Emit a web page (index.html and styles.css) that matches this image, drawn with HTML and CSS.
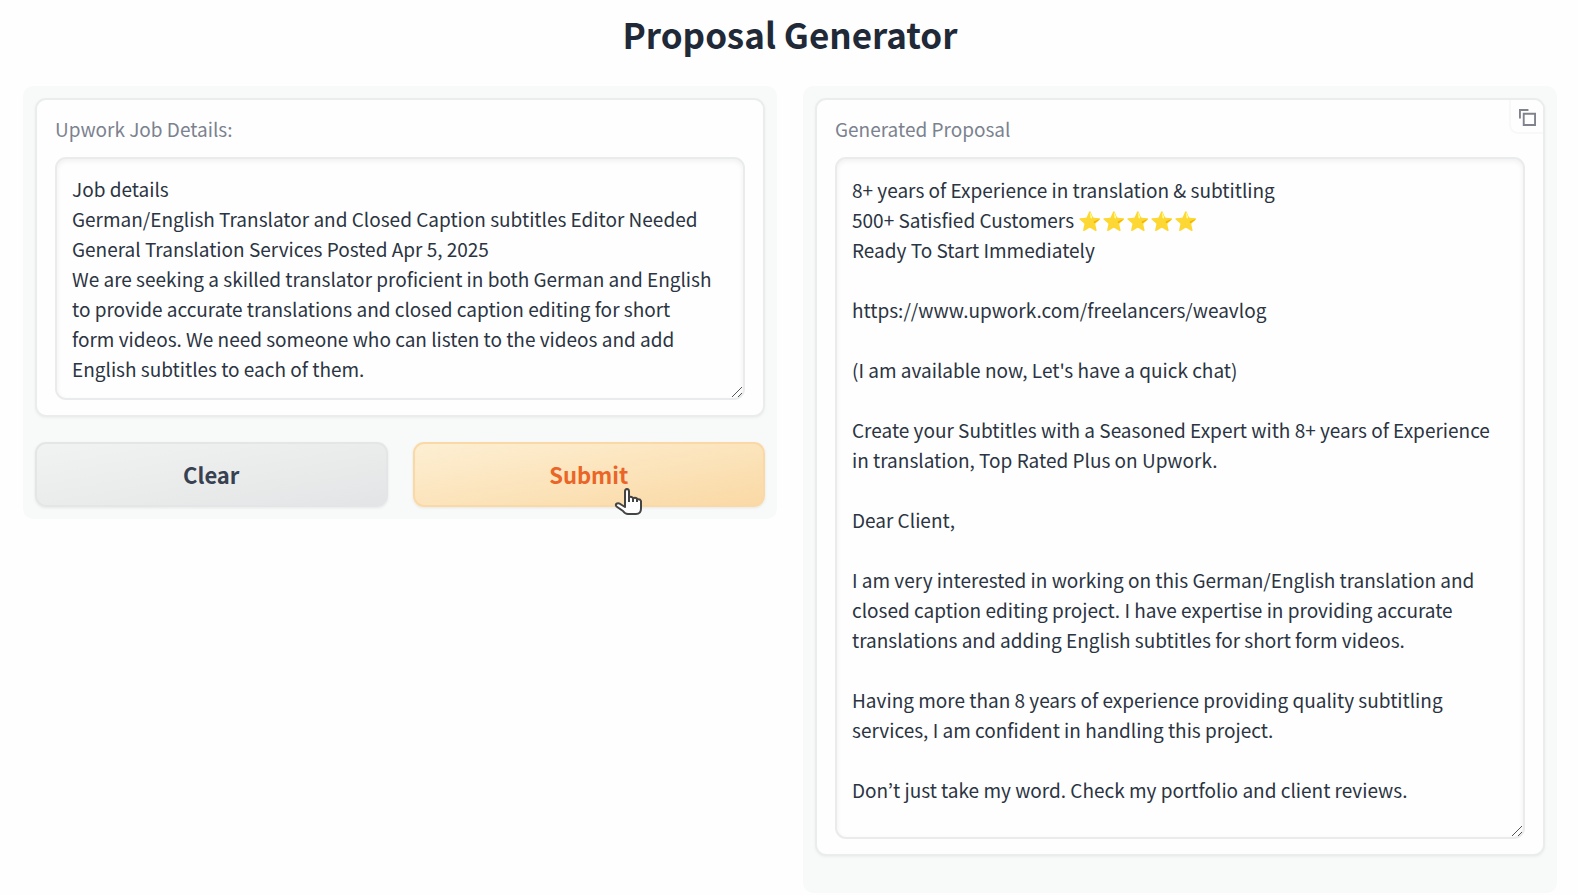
FILE: index.html
```html
<!DOCTYPE html>
<html lang="en">
<head>
<meta charset="utf-8">
<title>Proposal Generator</title>
<link rel="stylesheet" href="styles.css">
</head>
<body>
<main class="app">
  <h1 class="title">Proposal Generator</h1>
  <div class="columns">
    <section class="panel">
      <div class="card">
        <label class="label" for="job">Upwork Job Details:</label>
        <div class="field">
          <textarea class="textbox" id="job" rows="7" spellcheck="false">Job details
German/English Translator and Closed Caption subtitles Editor Needed
General Translation Services Posted Apr 5, 2025
We are seeking a skilled translator proficient in both German and English to provide accurate translations and closed caption editing for short form videos. We need someone who can listen to the videos and add English subtitles to each of them.</textarea>
          <svg class="grip" viewBox="0 0 12 12" aria-hidden="true"><path d="M1 11 11 1M7 11l4-4"/></svg>
        </div>
      </div>
      <div class="actions">
        <button class="button secondary" type="button">Clear</button>
        <button class="button primary" type="button">Submit
          <svg class="pointer" viewBox="0 0 30 30" aria-hidden="true"><path d="M12 16V4.500Q12 2 14 2T16 4.500V10.500Q17 9.500 18.500 10T20 11.500Q21.500 10.500 23 11T24 12.500Q27 11.500 28 14V21.500Q28 27 23 27H15Q12 27 10 24L3.500 19.500Q2 17.500 4 16.500T8 17.500L12 20Z"/><path class="knuckles" d="M16 10v5M20 11.500V15M24 12.500V15"/></svg>
        </button>
      </div>
    </section>
    <section class="panel result">
      <div class="card">
        <label class="label" for="proposal">Generated Proposal</label>
        <div class="field">
          <textarea class="textbox" id="proposal" rows="21" spellcheck="false">8+ years of Experience in translation &amp; subtitling
500+ Satisfied Customers ⭐⭐⭐⭐⭐
Ready To Start Immediately

https://www.upwork.com/freelancers/weavlog

(I am available now, Let's have a quick chat)

Create your Subtitles with a Seasoned Expert with 8+ years of Experience in translation, Top Rated Plus on Upwork.

Dear Client,

I am very interested in working on this German/English translation and closed caption editing project. I have expertise in providing accurate translations and adding English subtitles for short form videos.

Having more than 8 years of experience providing quality subtitling services, I am confident in handling this project.

Don’t just take my word. Check my portfolio and client reviews.</textarea>
          <svg class="grip" viewBox="0 0 12 12" aria-hidden="true"><path d="M1 11 11 1M7 11l4-4"/></svg>
        </div>
        <button class="copy" type="button" aria-label="Copy"><svg viewBox="0 0 18 18" aria-hidden="true"><path d="M5 5H17V17H5ZM1 10V1H10"/></svg></button>
      </div>
    </section>
  </div>
</main>
</body>
</html>
```
FILE: styles.css
```css
* { box-sizing: border-box; }
body {
  margin: 0;
  background: #fefefe;
  color: #1f2937;
  font-family: "Noto Sans CJK KR", "Noto Sans", sans-serif;
}
.app { padding: 10px 21px 2px 23px; }
.title {
  margin: 0 0 28px;
  font-size: 35px;
  line-height: 48px;
  font-weight: 600;
  text-align: center;
}
.columns {
  display: grid;
  grid-template-columns: 1fr 1fr;
  gap: 26px;
  align-items: start;
}
.panel {
  padding: 12px;
  border-radius: 10px;
  background: #f8faf9;
}
.result { padding-bottom: 37px; }
.card {
  position: relative;
  padding: 16px 18px 15px;
  border: 2px solid #ebeded;
  border-radius: 11px;
  background: #fefefe;
  box-shadow: 0 1px 3px rgba(0, 0, 0, 0.05);
}
.label {
  display: block;
  margin-bottom: 16px;
  font-size: 19px;
  line-height: 25px;
  color: #7b828f;
}
.field { position: relative; }
.textbox {
  display: block;
  width: 100%;
  padding: 15px 27px 14px 15px;
  border: 2px solid #e9ebec;
  border-radius: 11px;
  background: #fefefe;
  box-shadow: inset 0 2px 5px rgba(0, 0, 0, 0.06);
  color: #2b3442;
  font: inherit;
  font-size: 19px;
  line-height: 30px;
  outline: none;
  overflow: hidden;
  resize: none;
}
.result .textbox {
  padding-top: 16px;
  padding-bottom: 32px;
}
.grip {
  position: absolute;
  right: 2px;
  bottom: 2px;
  width: 12px;
  height: 12px;
  fill: none;
  stroke: #555;
  stroke-width: 1;
}
.actions {
  display: grid;
  grid-template-columns: 1fr 1fr;
  gap: 25px;
  margin-top: 25px;
}
.button {
  position: relative;
  height: 65px;
  padding: 0 0 2px;
  border: 2px solid;
  border-radius: 11px;
  font: inherit;
  font-size: 22px;
  font-weight: 600;
  box-shadow: 0 1px 3px rgba(0, 0, 0, 0.08);
}
.secondary {
  border-color: #e3e6e7;
  background: linear-gradient(to bottom right, #f1f3f2, #e9ebea 60%, #e3e4e7);
  color: #374151;
}
.primary {
  border-color: #fad9a6;
  background: linear-gradient(to bottom right, #fdefd3, #fad9a5);
  color: #ea6527;
}
.pointer {
  position: absolute;
  left: calc(50% + 24px);
  top: 43px;
  width: 30px;
  height: 30px;
  fill: #fff;
  stroke: #444;
  stroke-width: 2;
  stroke-linejoin: round;
}
.knuckles { fill: none; }
.copy {
  position: absolute;
  top: 0;
  right: 0;
  display: grid;
  place-items: center;
  width: 34px;
  height: 34px;
  padding: 2px 0 0;
  border: solid #f7f8f8;
  border-width: 0 0 2px 2px;
  border-radius: 0 9px 0 9px;
  background: #fefefe;
}
.copy svg {
  width: 17px;
  height: 17px;
  fill: none;
  stroke: #80828c;
  stroke-width: 2;
}
```
